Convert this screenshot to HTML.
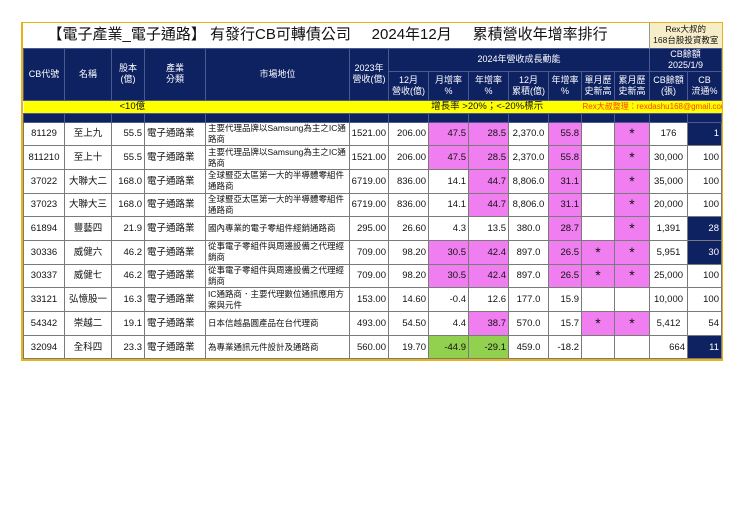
<!DOCTYPE html>
<html><head><meta charset="utf-8"><style>
body{margin:0;background:#fff;width:740px;height:523px;position:relative;font-family:"Liberation Sans","Noto Sans CJK TC",sans-serif;}
#w{position:absolute;left:21px;top:22px;width:698px;border:2px solid #e6b417;border-top-width:1px;}
table{border-collapse:collapse;table-layout:fixed;width:698px;}
td{padding:0;font-size:9.5px;line-height:11px;color:#111;border:1px solid #7a7a7a;overflow:hidden;white-space:nowrap;}
.t td{border:none;}
.h td{background:#0e2161;color:#fff;text-align:center;border:1px solid #4a5a90;font-size:9px;line-height:11px}
.d td{height:22.7px;text-align:center}
.r{text-align:right!important;padding-right:2px}
.l{text-align:left!important;padding-left:2px}
.m{text-align:left!important;padding-left:2px;white-space:normal!important;font-size:8.5px;line-height:11px}
.p{background:#f07ef0}
.g{background:#92d050}
.n{background:#0e2161;color:#fff}
.s{font-size:14px}
</style></head><body><div id="w"><table>
<colgroup><col style="width:41px"><col style="width:47px"><col style="width:33px"><col style="width:61px"><col style="width:144px"><col style="width:39px"><col style="width:40px"><col style="width:40px"><col style="width:40px"><col style="width:40px"><col style="width:33px"><col style="width:33px"><col style="width:35px"><col style="width:38px"><col style="width:34px"></colgroup>
<tr class="t" style="height:25px"><td colspan="13" style="font-size:15px;line-height:18px;padding-left:24px;">【電子產業_電子通路】 有發行CB可轉債公司&nbsp;&nbsp;&nbsp;&nbsp;&nbsp;2024年12月&nbsp;&nbsp;&nbsp;&nbsp;&nbsp;累積營收年增率排行</td><td colspan="2" style="background:#f6edc9;text-align:center;font-size:8.5px;line-height:11px;border-left:1px solid #999">Rex大叔的<br>168台股投資教室</td></tr>
<tr class="h" style="height:22px"><td rowspan="2">CB代號</td><td rowspan="2">名稱</td><td rowspan="2">股本<br>(億)</td><td rowspan="2">產業<br>分類</td><td rowspan="2">市場地位</td><td rowspan="2">2023年<br>營收(億)</td><td colspan="7">2024年營收成長動能</td><td colspan="2">CB餘額<br>2025/1/9</td></tr>
<tr class="h" style="height:29px"><td>12月<br>營收(億)</td><td>月增率<br>%</td><td>年增率<br>%</td><td>12月<br>累積(億)</td><td>年增率<br>%</td><td>單月歷<br>史新高</td><td>累月歷<br>史新高</td><td>CB餘額<br>(張)</td><td>CB<br>流通%</td></tr>
<tr style="height:13px;background:#ffff00"><td colspan="2" style="border:none"></td><td colspan="2" style="border:none;padding-left:8px">&lt;10億</td><td colspan="3" style="border:none"></td><td colspan="4" style="border:none">&nbsp;增長率 &gt;20%；&lt;-20%標示</td><td colspan="4" style="border:none;color:#ff3c00;padding-left:1px;font-size:8px">Rex大叔整理：rexdashu168@gmail.com</td></tr>
<tr class="h" style="height:9px"><td></td><td></td><td></td><td></td><td></td><td></td><td></td><td></td><td></td><td></td><td></td><td></td><td></td><td></td><td></td></tr>
<tr class="d"><td>81129</td><td>至上九</td><td class="r">55.5</td><td class="l">電子通路業</td><td class="m">主要代理品牌以Samsung為主之IC通路商</td><td class="r">1521.00</td><td class="r">206.00</td><td class="r p">47.5</td><td class="r p">28.5</td><td>2,370.0</td><td class="r p">55.8</td><td></td><td class="p s">*</td><td>176</td><td class="r n">1</td></tr>
<tr class="d"><td>811210</td><td>至上十</td><td class="r">55.5</td><td class="l">電子通路業</td><td class="m">主要代理品牌以Samsung為主之IC通路商</td><td class="r">1521.00</td><td class="r">206.00</td><td class="r p">47.5</td><td class="r p">28.5</td><td>2,370.0</td><td class="r p">55.8</td><td></td><td class="p s">*</td><td>30,000</td><td class="r">100</td></tr>
<tr class="d"><td>37022</td><td>大聯大二</td><td class="r">168.0</td><td class="l">電子通路業</td><td class="m">全球暨亞太區第一大的半導體零組件通路商</td><td class="r">6719.00</td><td class="r">836.00</td><td class="r">14.1</td><td class="r p">44.7</td><td>8,806.0</td><td class="r p">31.1</td><td></td><td class="p s">*</td><td>35,000</td><td class="r">100</td></tr>
<tr class="d"><td>37023</td><td>大聯大三</td><td class="r">168.0</td><td class="l">電子通路業</td><td class="m">全球暨亞太區第一大的半導體零組件通路商</td><td class="r">6719.00</td><td class="r">836.00</td><td class="r">14.1</td><td class="r p">44.7</td><td>8,806.0</td><td class="r p">31.1</td><td></td><td class="p s">*</td><td>20,000</td><td class="r">100</td></tr>
<tr class="d"><td>61894</td><td>豐藝四</td><td class="r">21.9</td><td class="l">電子通路業</td><td class="m">國內專業的電子零組件經銷通路商</td><td class="r">295.00</td><td class="r">26.60</td><td class="r">4.3</td><td class="r">13.5</td><td>380.0</td><td class="r p">28.7</td><td></td><td class="p s">*</td><td>1,391</td><td class="r n">28</td></tr>
<tr class="d"><td>30336</td><td>威健六</td><td class="r">46.2</td><td class="l">電子通路業</td><td class="m">從事電子零組件與周邊設備之代理經銷商</td><td class="r">709.00</td><td class="r">98.20</td><td class="r p">30.5</td><td class="r p">42.4</td><td>897.0</td><td class="r p">26.5</td><td class="p s">*</td><td class="p s">*</td><td>5,951</td><td class="r n">30</td></tr>
<tr class="d"><td>30337</td><td>威健七</td><td class="r">46.2</td><td class="l">電子通路業</td><td class="m">從事電子零組件與周邊設備之代理經銷商</td><td class="r">709.00</td><td class="r">98.20</td><td class="r p">30.5</td><td class="r p">42.4</td><td>897.0</td><td class="r p">26.5</td><td class="p s">*</td><td class="p s">*</td><td>25,000</td><td class="r">100</td></tr>
<tr class="d"><td>33121</td><td>弘憶股一</td><td class="r">16.3</td><td class="l">電子通路業</td><td class="m">IC通路商．主要代理數位通訊應用方案與元件</td><td class="r">153.00</td><td class="r">14.60</td><td class="r">-0.4</td><td class="r">12.6</td><td>177.0</td><td class="r">15.9</td><td></td><td></td><td>10,000</td><td class="r">100</td></tr>
<tr class="d"><td>54342</td><td>崇越二</td><td class="r">19.1</td><td class="l">電子通路業</td><td class="m">日本信越晶圓產品在台代理商</td><td class="r">493.00</td><td class="r">54.50</td><td class="r">4.4</td><td class="r p">38.7</td><td>570.0</td><td class="r">15.7</td><td class="p s">*</td><td class="p s">*</td><td>5,412</td><td class="r">54</td></tr>
<tr class="d"><td>32094</td><td>全科四</td><td class="r">23.3</td><td class="l">電子通路業</td><td class="m">為專業通訊元件設計及通路商</td><td class="r">560.00</td><td class="r">19.70</td><td class="r g">-44.9</td><td class="r g">-29.1</td><td>459.0</td><td class="r">-18.2</td><td></td><td></td><td class="r">664</td><td class="r n">11</td></tr>
</table></div></body></html>
